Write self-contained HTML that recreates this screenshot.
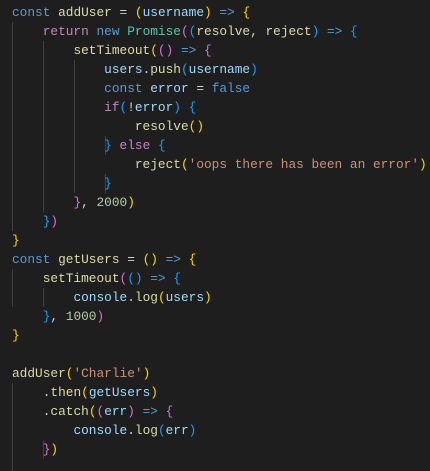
<!DOCTYPE html>
<html><head><style>
html,body{margin:0;padding:0;background:#1e1e1e;width:430px;height:471px;overflow:hidden}
pre{margin:0;position:absolute;left:12px;top:3px;font-family:"Liberation Mono",monospace;font-size:12.8px;line-height:19px;color:#d4d4d4}
.k{color:#569cd6}.c{color:#c586c0}.f{color:#dcdcaa}.v{color:#9cdcfe}.t{color:#4ec9b0}.s{color:#ce9178}.n{color:#b5cea8}
.g{color:#ffd700}.p{color:#da70d6}.b{color:#179fff}
.guide{position:absolute;width:1px;background:#404040}
</style></head><body>
<div class="guide" style="left:12px;top:22px;height:209px"></div>
<div class="guide" style="left:43px;top:41px;height:171px"></div>
<div class="guide" style="left:74px;top:60px;height:133px"></div>
<div class="guide" style="left:105px;top:136px;height:19px"></div>
<div class="guide" style="left:105px;top:174px;height:19px"></div>
<div class="guide" style="left:12px;top:269px;height:38px"></div>
<div class="guide" style="left:43px;top:288px;height:19px"></div>
<div class="guide" style="left:12px;top:383px;height:88px"></div>
<div class="guide" style="left:43px;top:440px;height:19px"></div>
<pre><span class="k">const</span> <span class="f">addUser</span> = <span class="g">(</span><span class="v">username</span><span class="g">)</span> <span class="k">=&gt;</span> <span class="g">{</span>
    <span class="c">return</span> <span class="k">new</span> <span class="t">Promise</span><span class="p">(</span><span class="b">(</span><span class="f">resolve</span>, <span class="f">reject</span><span class="b">)</span> <span class="k">=&gt;</span> <span class="b">{</span>
        <span class="f">setTimeout</span><span class="g">(</span><span class="p">()</span> <span class="k">=&gt;</span> <span class="p">{</span>
            <span class="v">users</span>.<span class="f">push</span><span class="b">(</span><span class="v">username</span><span class="b">)</span>
            <span class="k">const</span> <span class="v">error</span> = <span class="k">false</span>
            <span class="c">if</span><span class="b">(</span>!<span class="v">error</span><span class="b">)</span> <span class="b">{</span>
                <span class="f">resolve</span><span class="g">()</span>
            <span class="b">}</span> <span class="c">else</span> <span class="b">{</span>
                <span class="f">reject</span><span class="g">(</span><span class="s">'oops there has been an error'</span><span class="g">)</span>
            <span class="b">}</span>
        <span class="p">}</span>, <span class="n">2000</span><span class="g">)</span>
    <span class="b">}</span><span class="p">)</span>
<span class="g">}</span>
<span class="k">const</span> <span class="f">getUsers</span> = <span class="g">()</span> <span class="k">=&gt;</span> <span class="g">{</span>
    <span class="f">setTimeout</span><span class="p">(</span><span class="b">()</span> <span class="k">=&gt;</span> <span class="b">{</span>
        <span class="v">console</span>.<span class="f">log</span><span class="g">(</span><span class="v">users</span><span class="g">)</span>
    <span class="b">}</span>, <span class="n">1000</span><span class="p">)</span>
<span class="g">}</span>

<span class="f">addUser</span><span class="g">(</span><span class="s">'Charlie'</span><span class="g">)</span>
    .<span class="f">then</span><span class="g">(</span><span class="v">getUsers</span><span class="g">)</span>
    .<span class="f">catch</span><span class="g">(</span><span class="p">(</span><span class="v">err</span><span class="p">)</span> <span class="k">=&gt;</span> <span class="p">{</span>
        <span class="v">console</span>.<span class="f">log</span><span class="b">(</span><span class="v">err</span><span class="b">)</span>
    <span class="p">}</span><span class="g">)</span></pre>
</body></html>
